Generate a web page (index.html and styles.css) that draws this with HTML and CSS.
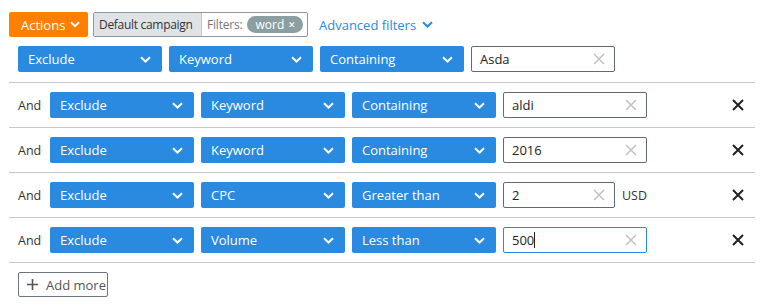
FILE: index.html
```html
<!DOCTYPE html>
<html lang="en">
<head>
    <meta charset="UTF-8">
    <title>Advanced filters</title>
    <link rel="stylesheet" href="styles.css">
</head>
<body>
    <div class="toolbar">
        <button class="actions">Actions
            <svg class="chev" width="10" height="7" viewBox="0 0 10 7"><path d="M1 1.2L5 5.2L9 1.2" /></svg>
        </button>
        <div class="campaign">
            <span class="campaign-name">Default campaign</span>
            <span class="campaign-filters">Filters:
                <span class="pill">word <span class="pill-x">&#x2715;</span></span>
            </span>
        </div>
        <a class="adv-link" href="#">Advanced filters
            <svg class="chev" width="11" height="7" viewBox="0 0 11 7"><path d="M1 1.2L5.5 5.5L10 1.2" /></svg>
        </a>
    </div>

    <div class="filters">
        <div class="row first">
            <div class="select">Exclude<svg class="chev" width="11" height="7" viewBox="0 0 11 7"><path d="M1 1.2L5.5 5.5L10 1.2" /></svg></div>
            <div class="select">Keyword<svg class="chev" width="11" height="7" viewBox="0 0 11 7"><path d="M1 1.2L5.5 5.5L10 1.2" /></svg></div>
            <div class="select">Containing<svg class="chev" width="11" height="7" viewBox="0 0 11 7"><path d="M1 1.2L5.5 5.5L10 1.2" /></svg></div>
            <div class="input">Asda<svg class="clear" width="12" height="12" viewBox="0 0 12 12"><path d="M1 1L11 11M11 1L1 11" /></svg></div>
        </div>

        <div class="row">
            <span class="and">And</span>
            <div class="select">Exclude<svg class="chev" width="11" height="7" viewBox="0 0 11 7"><path d="M1 1.2L5.5 5.5L10 1.2" /></svg></div>
            <div class="select">Keyword<svg class="chev" width="11" height="7" viewBox="0 0 11 7"><path d="M1 1.2L5.5 5.5L10 1.2" /></svg></div>
            <div class="select">Containing<svg class="chev" width="11" height="7" viewBox="0 0 11 7"><path d="M1 1.2L5.5 5.5L10 1.2" /></svg></div>
            <div class="input">aldi<svg class="clear" width="12" height="12" viewBox="0 0 12 12"><path d="M1 1L11 11M11 1L1 11" /></svg></div>
            <svg class="remove" width="12" height="12" viewBox="0 0 12 12"><path d="M1 1L11 11M11 1L1 11" /></svg>
        </div>

        <div class="row">
            <span class="and">And</span>
            <div class="select">Exclude<svg class="chev" width="11" height="7" viewBox="0 0 11 7"><path d="M1 1.2L5.5 5.5L10 1.2" /></svg></div>
            <div class="select">Keyword<svg class="chev" width="11" height="7" viewBox="0 0 11 7"><path d="M1 1.2L5.5 5.5L10 1.2" /></svg></div>
            <div class="select">Containing<svg class="chev" width="11" height="7" viewBox="0 0 11 7"><path d="M1 1.2L5.5 5.5L10 1.2" /></svg></div>
            <div class="input">2016<svg class="clear" width="12" height="12" viewBox="0 0 12 12"><path d="M1 1L11 11M11 1L1 11" /></svg></div>
            <svg class="remove" width="12" height="12" viewBox="0 0 12 12"><path d="M1 1L11 11M11 1L1 11" /></svg>
        </div>

        <div class="row">
            <span class="and">And</span>
            <div class="select">Exclude<svg class="chev" width="11" height="7" viewBox="0 0 11 7"><path d="M1 1.2L5.5 5.5L10 1.2" /></svg></div>
            <div class="select">CPC<svg class="chev" width="11" height="7" viewBox="0 0 11 7"><path d="M1 1.2L5.5 5.5L10 1.2" /></svg></div>
            <div class="select">Greater than<svg class="chev" width="11" height="7" viewBox="0 0 11 7"><path d="M1 1.2L5.5 5.5L10 1.2" /></svg></div>
            <div class="input short">2<svg class="clear" width="12" height="12" viewBox="0 0 12 12"><path d="M1 1L11 11M11 1L1 11" /></svg></div>
            <span class="unit">USD</span>
            <svg class="remove" width="12" height="12" viewBox="0 0 12 12"><path d="M1 1L11 11M11 1L1 11" /></svg>
        </div>

        <div class="row">
            <span class="and">And</span>
            <div class="select">Exclude<svg class="chev" width="11" height="7" viewBox="0 0 11 7"><path d="M1 1.2L5.5 5.5L10 1.2" /></svg></div>
            <div class="select">Volume<svg class="chev" width="11" height="7" viewBox="0 0 11 7"><path d="M1 1.2L5.5 5.5L10 1.2" /></svg></div>
            <div class="select">Less than<svg class="chev" width="11" height="7" viewBox="0 0 11 7"><path d="M1 1.2L5.5 5.5L10 1.2" /></svg></div>
            <div class="input focused">500<span class="caret"></span><svg class="clear" width="12" height="12" viewBox="0 0 12 12"><path d="M1 1L11 11M11 1L1 11" /></svg></div>
            <svg class="remove" width="12" height="12" viewBox="0 0 12 12"><path d="M1 1L11 11M11 1L1 11" /></svg>
        </div>

        <button class="add-more">
            <svg width="11" height="11" viewBox="0 0 11 11"><path d="M5.5 0V11M0 5.5H11" /></svg>
            Add more
        </button>
    </div>
</body>
</html>
```

FILE: styles.css
```css
body {
    margin: 0;
    padding: 12px 13px 0 9px;
    font-family: "Open Sans", Arial, sans-serif;
    font-size: 12.5px;
    color: #333;
    background: #fff;
}
.toolbar {
    display: flex;
    align-items: center;
    height: 25px;
    white-space: nowrap;
}
.chev path {
    fill: none;
    stroke: #fff;
    stroke-width: 2;
}
.actions {
    display: flex;
    align-items: center;
    justify-content: space-between;
    width: 79px;
    height: 25px;
    padding: 0 8px 0 12px;
    border: none;
    border-radius: 2px;
    background: #ff7f00;
    color: #fff;
    font: inherit;
    font-size: 13px;
}
.campaign {
    display: flex;
    height: 25px;
    margin-left: 5px;
    border: 1px solid #8e979b;
    border-radius: 2px;
    box-sizing: border-box;
    width: 215px;
    overflow: hidden;
}
.campaign-name {
    display: flex;
    align-items: center;
    flex: none;
    width: 108px;
    padding-left: 5px;
    box-sizing: border-box;
    background: #dfe3e6;
    border-right: 1px solid #c4cacd;
    color: #333;
    font-size: 12px;
    letter-spacing: -0.3px;
}
.campaign-filters {
    display: flex;
    align-items: center;
    padding-left: 5px;
    color: #777;
    gap: 5px;
    font-size: 12px;
    letter-spacing: -0.2px;
}
.pill {
    display: flex;
    align-items: center;
    gap: 4px;
    height: 17px;
    padding: 0 7px 0 8px;
    border-radius: 9px;
    background: #8b9ea1;
    color: #fff;
    font-size: 12px;
    letter-spacing: 0;
}
.pill-x {
    font-size: 9px;
}
.adv-link {
    display: flex;
    align-items: center;
    gap: 6px;
    margin-left: 11px;
    color: #2a8ae0;
    text-decoration: none;
    font-size: 13px;
}
.adv-link .chev path {
    stroke: #2a8ae0;
}
.filters {
    margin-top: 9px;
}
.row {
    display: flex;
    align-items: center;
    padding: 9px 11px 9px 9px;
    border-bottom: 1px solid #c8c8c8;
}
.row.first {
    padding-top: 0;
    padding-bottom: 10px;
}
.and {
    width: 32px;
    color: #333;
}
.select {
    display: flex;
    align-items: center;
    justify-content: space-between;
    width: 144px;
    height: 26px;
    margin-right: 7px;
    padding: 0 11px 0 10px;
    box-sizing: border-box;
    border-radius: 2px;
    background: #2a8ae0;
    color: #fff;
    font-size: 13px;
}
.input {
    display: flex;
    align-items: center;
    justify-content: space-between;
    width: 144px;
    height: 26px;
    padding: 0 9px 0 8px;
    box-sizing: border-box;
    border: 1px solid #5e6b73;
    border-radius: 2px;
    color: #222;
    font-size: 13px;
}
.input.short {
    width: 112px;
}
.input.focused {
    border-color: #2a8ae0;
    justify-content: flex-start;
}
.input.focused .clear {
    margin-left: auto;
}
.caret {
    width: 1px;
    height: 16px;
    background: #222;
}
.clear path {
    stroke: #c4c4c4;
    stroke-width: 1.6;
}
.unit {
    margin-left: 7px;
    color: #333;
}
.remove {
    margin-left: auto;
}
.remove path {
    stroke: #222;
    stroke-width: 2;
}
.add-more {
    display: flex;
    align-items: center;
    gap: 8px;
    width: 90px;
    height: 25px;
    margin: 9px 0 0 9px;
    padding: 0 0 0 8px;
    border: 1px solid #6b777d;
    border-radius: 2px;
    background: #fff;
    color: #555;
    font: inherit;
    font-size: 13px;
    white-space: nowrap;
}
.add-more path {
    stroke: #555;
    stroke-width: 1.6;
}
```
